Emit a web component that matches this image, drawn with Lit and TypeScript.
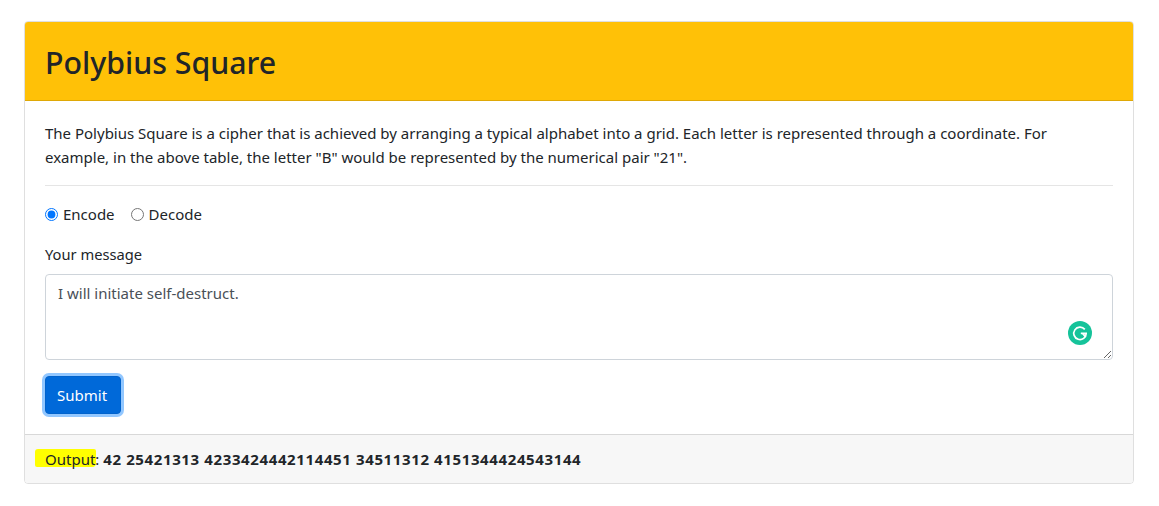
import { LitElement, html, css } from "lit";
import { customElement } from "lit/decorators.js";

@customElement("app-root")
export class AppRoot extends LitElement {
  static styles = css`
    :host { display: block; box-sizing: border-box; padding: 21px 25px 22px 24px; font-family: "Noto Sans", "Open Sans", sans-serif; font-size: 16px; line-height: 24px; color: #212529; background: #fff; }
    * { box-sizing: border-box; }
    .card { border: 1px solid rgba(0,0,0,.125); border-radius: 4px; display: flex; flex-direction: column; overflow: hidden; }
    .head { background: #ffc107; height: 79px; padding: 4px 20px 0; display: flex; align-items: center; border-bottom: 1px solid rgba(0,0,0,.125); }
    h2 { margin: 0; font-size: 30.3px; font-weight: 500; line-height: 38px; }
    .body { padding: 20px; display: flex; flex-direction: column; }
    p { margin: 0 0 16px; font-size: 15px; }
    hr { border: 0; border-top: 1px solid rgba(0,0,0,.1); margin: 0 0 16px; width: 100%; }
    .radios { display: flex; gap: 16px; margin-bottom: 16px; font-size: 15px; }
    .radios label { display: flex; align-items: center; gap: 5px; }
    input[type=radio] { margin: 0; width: 13px; height: 13px; }
    .lab { font-size: 14.7px; margin-bottom: 8px; }
    .ta { position: relative; margin-bottom: 16px; display: flex; }
    textarea { width: 100%; height: 86px; padding: 6px 12px; border: 1px solid #ced4da; border-radius: 4px; font: inherit; font-size: 15px; color: #495057; outline: none; resize: vertical; }
    .g { position: absolute; right: 21px; bottom: 15px; width: 24px; height: 24px; }
    button { align-self: flex-start; height: 38px; padding: 0 12.5px 0 11px; background: #0069d9; color: #fff; border: 1px solid #0062cc; border-radius: 4px; font: inherit; font-size: 15px; box-shadow: 0 0 0 3px rgba(38,143,255,.5); }
    .foot { position: relative; background: #f7f7f7; border-top: 1px solid rgba(0,0,0,.125); height: 49px; padding: 0 20px; display: flex; align-items: center; font-size: 15px; white-space: pre; }
    .foot span, .foot b { position: relative; }
    .foot b { font-weight: 700; font-size: 15px; letter-spacing: 0.62px; }
    .mark { position: absolute; left: 10px; top: 14px; width: 61px; height: 18px; background: #ffff00; border-radius: 3px 2px 4px 2px; }
  `;
  render() {
    return html`<div class="card">
      <div class="head"><h2>Polybius Square</h2></div>
      <div class="body">
        <p>The Polybius Square is a cipher that is achieved by arranging a typical alphabet into a grid. Each letter is represented through a coordinate. For example, in the above table, the letter "B" would be represented by the numerical pair "21".</p>
        <hr />
        <div class="radios">
          <label><input type="radio" name="m" checked />Encode</label>
          <label><input type="radio" name="m" />Decode</label>
        </div>
        <div class="lab">Your message</div>
        <div class="ta">
          <textarea .value=${"I will initiate self-destruct."}></textarea>
          <svg class="g" viewBox="0 0 24 24"><circle cx="12" cy="12" r="12" fill="#15c39a"/><path d="M16.8 8.4A6.2 6.2 0 1 0 18.2 12.4h-5.4M14.8 12.6l3 3.6" fill="none" stroke="#fff" stroke-width="1.7"/></svg>
        </div>
        <button>Submit</button>
      </div>
      <div class="foot"><div class="mark"></div><span>Output: </span><b>42 25421313 4233424442114451 34511312 4151344424543144</b></div>
    </div>`;
  }
}
